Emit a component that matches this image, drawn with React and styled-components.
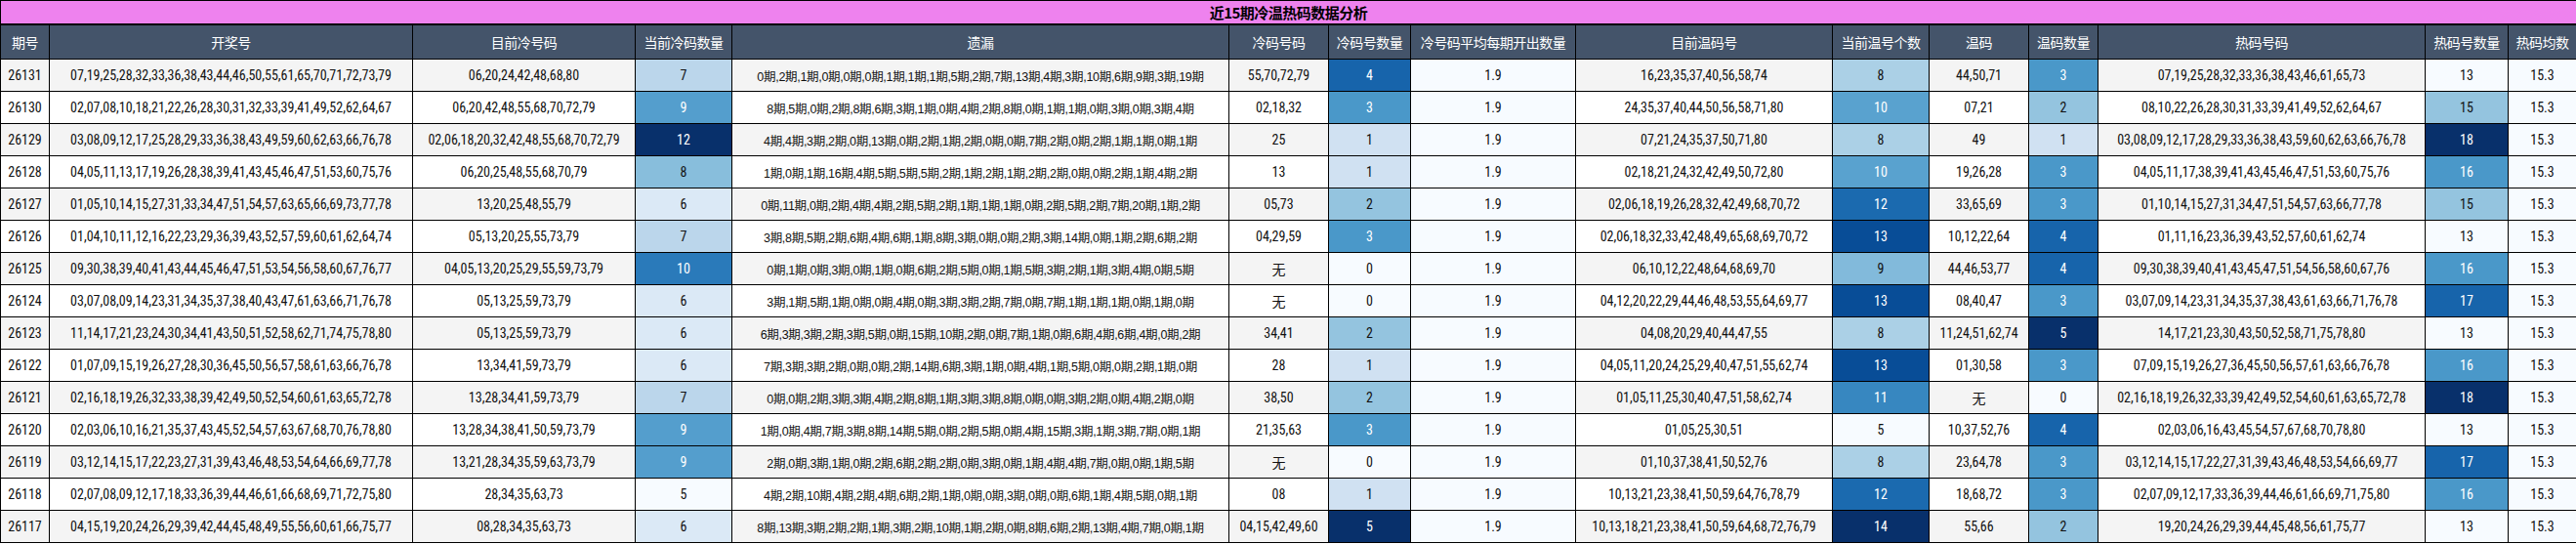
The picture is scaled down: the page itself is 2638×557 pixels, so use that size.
import React from "react";
import styled, { createGlobalStyle } from "styled-components";

const GlobalStyle = createGlobalStyle`
  body { margin: 0; background: #fff; }
`;

const COLS = [
  { title: "期号", w: 50 },
  { title: "开奖号", w: 372 },
  { title: "目前冷号码", w: 228 },
  { title: "当前冷码数量", w: 99, scale: [5, 12] },
  { title: "遗漏", w: 509, wide: true },
  { title: "冷码号码", w: 102 },
  { title: "冷码号数量", w: 84, scale: [0, 5] },
  { title: "冷号码平均每期开出数量", w: 169, scale: [1.9, 1.9] },
  { title: "目前温码号", w: 263 },
  { title: "当前温号个数", w: 99, scale: [5, 14] },
  { title: "温码", w: 102 },
  { title: "温码数量", w: 71, scale: [0, 5] },
  { title: "热码号码", w: 335 },
  { title: "热码号数量", w: 85, scale: [13, 18] },
  { title: "热码均数", w: 70, scale: [15.3, 15.3] },
];

const RAW = `26131|07,19,25,28,32,33,36,38,43,44,46,50,55,61,65,70,71,72,73,79|06,20,24,42,48,68,80|7|0期,2期,1期,0期,0期,0期,1期,1期,1期,5期,2期,7期,13期,4期,3期,10期,6期,9期,3期,19期|55,70,72,79|4|16,23,35,37,40,56,58,74|8|44,50,71|3|07,19,25,28,32,33,36,38,43,46,61,65,73|13
26130|02,07,08,10,18,21,22,26,28,30,31,32,33,39,41,49,52,62,64,67|06,20,42,48,55,68,70,72,79|9|8期,5期,0期,2期,8期,6期,3期,1期,0期,4期,2期,8期,0期,1期,1期,0期,3期,0期,3期,4期|02,18,32|3|24,35,37,40,44,50,56,58,71,80|10|07,21|2|08,10,22,26,28,30,31,33,39,41,49,52,62,64,67|15
26129|03,08,09,12,17,25,28,29,33,36,38,43,49,59,60,62,63,66,76,78|02,06,18,20,32,42,48,55,68,70,72,79|12|4期,4期,3期,2期,0期,13期,0期,2期,1期,2期,0期,0期,7期,2期,0期,2期,1期,1期,0期,1期|25|1|07,21,24,35,37,50,71,80|8|49|1|03,08,09,12,17,28,29,33,36,38,43,59,60,62,63,66,76,78|18
26128|04,05,11,13,17,19,26,28,38,39,41,43,45,46,47,51,53,60,75,76|06,20,25,48,55,68,70,79|8|1期,0期,1期,16期,4期,5期,5期,5期,2期,1期,2期,1期,2期,2期,0期,0期,2期,1期,4期,2期|13|1|02,18,21,24,32,42,49,50,72,80|10|19,26,28|3|04,05,11,17,38,39,41,43,45,46,47,51,53,60,75,76|16
26127|01,05,10,14,15,27,31,33,34,47,51,54,57,63,65,66,69,73,77,78|13,20,25,48,55,79|6|0期,11期,0期,2期,4期,4期,2期,5期,2期,1期,1期,1期,0期,2期,5期,2期,7期,20期,1期,2期|05,73|2|02,06,18,19,26,28,32,42,49,68,70,72|12|33,65,69|3|01,10,14,15,27,31,34,47,51,54,57,63,66,77,78|15
26126|01,04,10,11,12,16,22,23,29,36,39,43,52,57,59,60,61,62,64,74|05,13,20,25,55,73,79|7|3期,8期,5期,2期,6期,4期,6期,1期,8期,3期,0期,0期,2期,3期,14期,0期,1期,2期,6期,2期|04,29,59|3|02,06,18,32,33,42,48,49,65,68,69,70,72|13|10,12,22,64|4|01,11,16,23,36,39,43,52,57,60,61,62,74|13
26125|09,30,38,39,40,41,43,44,45,46,47,51,53,54,56,58,60,67,76,77|04,05,13,20,25,29,55,59,73,79|10|0期,1期,0期,3期,0期,1期,0期,6期,2期,5期,0期,1期,5期,3期,2期,1期,3期,4期,0期,5期|无|0|06,10,12,22,48,64,68,69,70|9|44,46,53,77|4|09,30,38,39,40,41,43,45,47,51,54,56,58,60,67,76|16
26124|03,07,08,09,14,23,31,34,35,37,38,40,43,47,61,63,66,71,76,78|05,13,25,59,73,79|6|3期,1期,5期,1期,0期,0期,4期,0期,3期,3期,2期,7期,0期,7期,1期,1期,1期,0期,1期,0期|无|0|04,12,20,22,29,44,46,48,53,55,64,69,77|13|08,40,47|3|03,07,09,14,23,31,34,35,37,38,43,61,63,66,71,76,78|17
26123|11,14,17,21,23,24,30,34,41,43,50,51,52,58,62,71,74,75,78,80|05,13,25,59,73,79|6|6期,3期,3期,2期,3期,5期,0期,15期,10期,2期,0期,7期,1期,0期,6期,4期,6期,4期,0期,2期|34,41|2|04,08,20,29,40,44,47,55|8|11,24,51,62,74|5|14,17,21,23,30,43,50,52,58,71,75,78,80|13
26122|01,07,09,15,19,26,27,28,30,36,45,50,56,57,58,61,63,66,76,78|13,34,41,59,73,79|6|7期,3期,3期,2期,0期,0期,2期,14期,6期,3期,1期,0期,4期,1期,5期,0期,0期,2期,1期,0期|28|1|04,05,11,20,24,25,29,40,47,51,55,62,74|13|01,30,58|3|07,09,15,19,26,27,36,45,50,56,57,61,63,66,76,78|16
26121|02,16,18,19,26,32,33,38,39,42,49,50,52,54,60,61,63,65,72,78|13,28,34,41,59,73,79|7|0期,0期,2期,3期,3期,4期,2期,8期,1期,3期,3期,8期,0期,0期,3期,2期,0期,4期,2期,0期|38,50|2|01,05,11,25,30,40,47,51,58,62,74|11|无|0|02,16,18,19,26,32,33,39,42,49,52,54,60,61,63,65,72,78|18
26120|02,03,06,10,16,21,35,37,43,45,52,54,57,63,67,68,70,76,78,80|13,28,34,38,41,50,59,73,79|9|1期,0期,4期,7期,3期,8期,14期,5期,0期,2期,5期,0期,4期,15期,3期,1期,3期,7期,0期,1期|21,35,63|3|01,05,25,30,51|5|10,37,52,76|4|02,03,06,16,43,45,54,57,67,68,70,78,80|13
26119|03,12,14,15,17,22,23,27,31,39,43,46,48,53,54,64,66,69,77,78|13,21,28,34,35,59,63,73,79|9|2期,0期,3期,1期,0期,2期,6期,2期,2期,0期,3期,0期,1期,4期,4期,7期,0期,0期,1期,5期|无|0|01,10,37,38,41,50,52,76|8|23,64,78|3|03,12,14,15,17,22,27,31,39,43,46,48,53,54,66,69,77|17
26118|02,07,08,09,12,17,18,33,36,39,44,46,61,66,68,69,71,72,75,80|28,34,35,63,73|5|4期,2期,10期,4期,2期,4期,6期,2期,1期,0期,0期,3期,0期,0期,6期,1期,4期,5期,0期,1期|08|1|10,13,21,23,38,41,50,59,64,76,78,79|12|18,68,72|3|02,07,09,12,17,33,36,39,44,46,61,66,69,71,75,80|16
26117|04,15,19,20,24,26,29,39,42,44,45,48,49,55,56,60,61,66,75,77|08,28,34,35,63,73|6|8期,13期,3期,2期,2期,1期,3期,2期,10期,1期,2期,0期,8期,6期,2期,13期,4期,7期,0期,1期|04,15,42,49,60|5|10,13,18,21,23,38,41,50,59,64,68,72,76,79|14|55,66|2|19,20,24,26,29,39,44,45,48,56,61,75,77|13`;

// [period, draw, coldNums, coldCount, miss, coldHit, coldHitCount, warmNums, warmCount, warm, warmHitCount, hot, hotCount]
const ROWS = RAW.split("\n").map((line) => {
  const p = line.split("|");
  return [p[0], p[1], p[2], p[3], p[4], p[5], p[6], "1.9", p[7], p[8], p[9], p[10], p[11], p[12], "15.3"];
});

const BLUES = ["#f7fbff", "#deebf7", "#c6dbef", "#9ecae1", "#6baed6", "#4292c6", "#2171b5", "#08519c", "#08306b"];

function hex(c) {
  return [1, 3, 5].map((i) => parseInt(c.slice(i, i + 2), 16));
}

function blue(t) {
  const x = Math.max(0, Math.min(1, t)) * (BLUES.length - 1);
  const i = Math.min(Math.floor(x), BLUES.length - 2);
  const f = x - i;
  const a = hex(BLUES[i]);
  const b = hex(BLUES[i + 1]);
  const m = a.map((v, k) => Math.round(v + (b[k] - v) * f));
  return `rgb(${m.join(",")})`;
}

export default function App() {
  return (
    <>
      <GlobalStyle />
      <Table>
        <colgroup>
          {COLS.map((c, i) => (
            <col key={i} style={{ width: c.w }} />
          ))}
        </colgroup>
        <thead>
          <tr>
            <Title colSpan={COLS.length}>近15期冷温热码数据分析</Title>
          </tr>
          <tr>
            {COLS.map((c) => (
              <Head key={c.title}>{c.title}</Head>
            ))}
          </tr>
        </thead>
        <tbody>
          {ROWS.map((r, ri) => (
            <tr key={r[0]}>
              {r.map((v, ci) => {
                const col = COLS[ci];
                if (col.scale) {
                  const [lo, hi] = col.scale;
                  const t = hi === lo ? 0 : (Number(v) - lo) / (hi - lo);
                  return (
                    <Cell key={ci} style={{ background: blue(t), color: t > 0.5 ? "#fff" : "#111" }}>
                      {v}
                    </Cell>
                  );
                }
                return (
                  <Cell key={ci} $alt={ri % 2 === 0} $wide={col.wide}>
                    {v}
                  </Cell>
                );
              })}
            </tr>
          ))}
        </tbody>
      </Table>
    </>
  );
}

const Table = styled.table`
  width: 2638px;
  table-layout: fixed;
  border-collapse: collapse;
  font-family: "Liberation Sans Narrow", "Roboto Condensed", "Noto Sans CJK SC", sans-serif;
`;

const Title = styled.th`
  height: 23px;
  padding: 0;
  background: #ee82ee;
  border: 1px solid #000;
  border-bottom: 2px solid #000;
  color: #000;
  font-family: "Noto Sans CJK SC", sans-serif;
  font-size: 15px;
  font-weight: bold;
  letter-spacing: -0.5px;
`;

const Head = styled.th`
  height: 34px;
  padding: 0 2px;
  background: #44546a;
  color: #fff;
  border: 1px solid #000;
  font-family: "Noto Sans CJK SC", sans-serif;
  font-size: 14px;
  font-weight: normal;
  letter-spacing: -0.5px;
  white-space: nowrap;
  overflow: hidden;
`;

const Cell = styled.td`
  height: 32px;
  padding: 0 2px;
  border: 1px solid #000;
  background: ${(p) => (p.$alt ? "#f4f4f4" : "#fff")};
  color: #111;
  text-align: center;
  white-space: nowrap;
  overflow: hidden;
  font-size: ${(p) => (p.$wide ? "12.5px" : "14px")};
  font-family: ${(p) =>
    p.$wide
      ? `"Liberation Sans", "Noto Sans CJK SC", sans-serif`
      : `"Liberation Sans Narrow", "Roboto Condensed", "Noto Sans CJK SC", sans-serif`};
  letter-spacing: ${(p) => (p.$wide ? "-0.3px" : "0")};
`;
